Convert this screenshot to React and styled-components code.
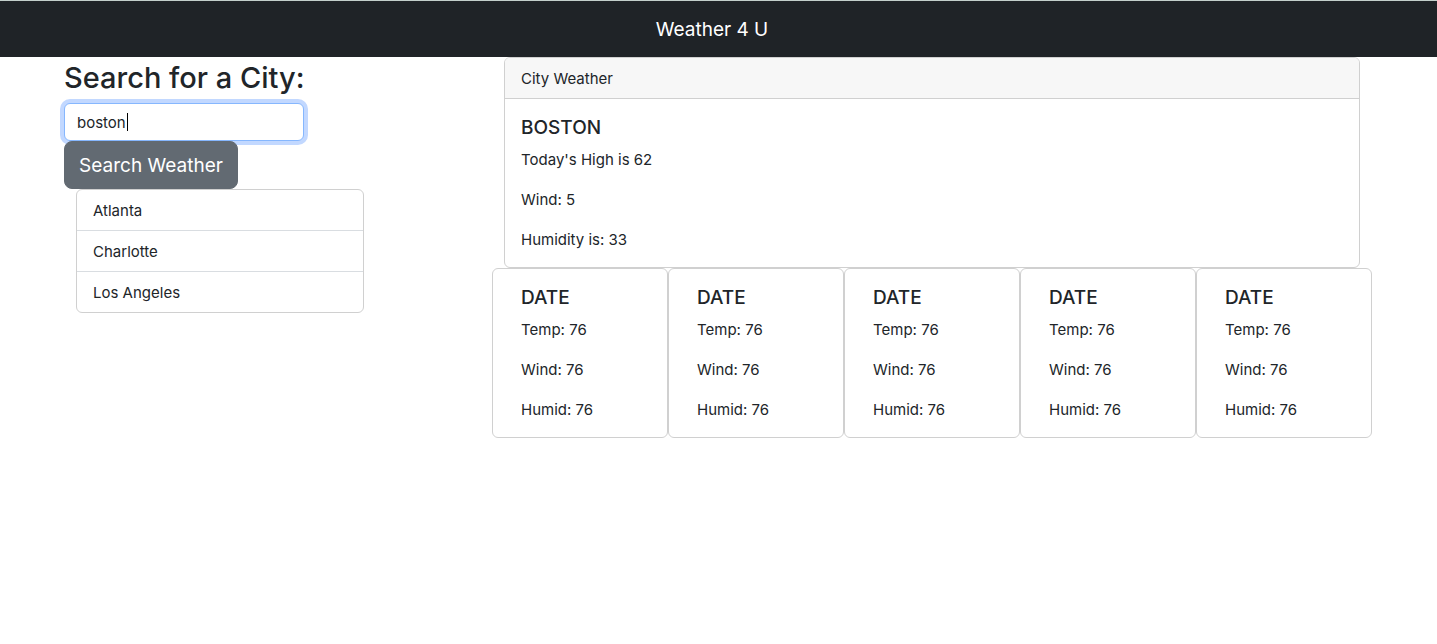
import React, { useEffect, useRef, useState } from "react";
import styled, { createGlobalStyle } from "styled-components";

const GlobalStyle = createGlobalStyle`
  *, *::before, *::after { box-sizing: border-box; }
  body {
    margin: 0;
    background: #fff;
    color: #212529;
    font-family: Inter, "Liberation Sans", sans-serif;
    font-size: 15px;
    line-height: 24px;
  }
`;

const NavBar = styled.header`
  border-top: 1px solid #c3cfcb;
  background: #1f2327;
  padding: 14px 65px 12px 52px;
  text-align: center;
`;

const Brand = styled.a`
  display: block;
  color: #fff;
  font-size: 19px;
  line-height: 30px;
  text-decoration: none;
`;

const Columns = styled.main`
  display: grid;
  grid-template-columns: minmax(0, 1fr) minmax(0, 2fr);
  align-items: start;
  padding: 0 65px 0 52px;
`;

const SearchPanel = styled.section`
  padding: 0 12px;
`;

const SearchForm = styled.form`
  display: flex;
  flex-direction: column;
  align-items: flex-start;
`;

const SearchLabel = styled.label`
  padding-top: 2px;
  margin-bottom: 6px;
  font-size: 29px;
  font-weight: 500;
  line-height: 38px;
`;

const Field = styled.div`
  position: relative;
`;

const CityInput = styled.input`
  display: block;
  width: 240px;
  height: 38px;
  padding: 6px 12px;
  border: 1px solid #86b7fe;
  border-radius: 6px;
  outline: 0;
  box-shadow: 0 0 0 4px #c2d8ff;
  background: #fff;
  color: inherit;
  font: inherit;
  caret-color: ${(p) => (p.$edited ? "auto" : "transparent")};
`;

const Caret = styled.span`
  position: absolute;
  top: 10px;
  left: 63px;
  width: 1px;
  height: 18px;
  background: #000;
  pointer-events: none;
`;

const SearchButton = styled.button`
  position: relative;
  min-width: 174px;
  padding: 9px 14px 7px;
  border: 1px solid #626a72;
  border-radius: 8px;
  background: #626a72;
  color: #fff;
  font-family: inherit;
  font-size: 19px;
  line-height: 30px;
`;

const CityList = styled.ul`
  width: 288px;
  margin: 0 12px;
  padding: 0;
  border: 1px solid #d0d0d0;
  border-radius: 6px;
  list-style: none;
`;

const CityItem = styled.li`
  padding: 9px 16px 7px;

  & + & {
    border-top: 1px solid #d9dde1;
  }
`;

const Card = styled.article`
  border: 1px solid #d0d0d0;
  border-radius: 6px;
  background: #fff;
  overflow: hidden;
`;

const CurrentCard = styled(Card)`
  margin: 0 12px;
`;

const CardHeader = styled.div`
  padding: 9px 16px 7px;
  border-bottom: 1px solid #d0d0d0;
  background: #f7f7f7;
`;

const CardBody = styled.div`
  display: grid;
  gap: 16px;
  padding: 17px ${(p) => (p.$wide ? 28 : 16)}px 15px;
`;

const CardTitle = styled.h2`
  margin: 0 0 -8px;
  font-size: 19px;
  font-weight: 500;
  line-height: 24px;
`;

const CardText = styled.p`
  margin: 0;
`;

const Forecast = styled.div`
  display: grid;
  grid-template-columns: repeat(5, minmax(0, 1fr));
`;

const cities = ["Atlanta", "Charlotte", "Los Angeles"];
const forecast = Array.from({ length: 5 }, () => ({ temp: 76, wind: 76, humid: 76 }));

export default function App() {
  const [city, setCity] = useState("boston");
  const [edited, setEdited] = useState(false);
  const inputRef = useRef(null);

  useEffect(() => {
    const input = inputRef.current;
    input.focus();
    input.setSelectionRange(input.value.length, input.value.length);
  }, []);

  const handleChange = (e) => {
    setCity(e.target.value);
    setEdited(true);
  };

  return (
    <>
      <GlobalStyle />
      <NavBar>
        <Brand href="#">Weather 4 U</Brand>
      </NavBar>
      <Columns>
        <SearchPanel>
          <SearchForm onSubmit={(e) => e.preventDefault()}>
            <SearchLabel htmlFor="city">Search for a City:</SearchLabel>
            <Field>
              <CityInput
                id="city"
                ref={inputRef}
                value={city}
                onChange={handleChange}
                $edited={edited}
              />
              {!edited && <Caret aria-hidden="true" />}
            </Field>
            <SearchButton type="submit">Search Weather</SearchButton>
          </SearchForm>
          <CityList>
            {cities.map((name) => (
              <CityItem key={name}>{name}</CityItem>
            ))}
          </CityList>
        </SearchPanel>
        <section>
          <CurrentCard>
            <CardHeader>City Weather</CardHeader>
            <CardBody>
              <CardTitle>BOSTON</CardTitle>
              <CardText>Today's High is 62</CardText>
              <CardText>Wind: 5</CardText>
              <CardText>Humidity is: 33</CardText>
            </CardBody>
          </CurrentCard>
          <Forecast>
            {forecast.map((day, i) => (
              <Card key={i}>
                <CardBody $wide>
                  <CardTitle>DATE</CardTitle>
                  <CardText>Temp: {day.temp}</CardText>
                  <CardText>Wind: {day.wind}</CardText>
                  <CardText>Humid: {day.humid}</CardText>
                </CardBody>
              </Card>
            ))}
          </Forecast>
        </section>
      </Columns>
    </>
  );
}
